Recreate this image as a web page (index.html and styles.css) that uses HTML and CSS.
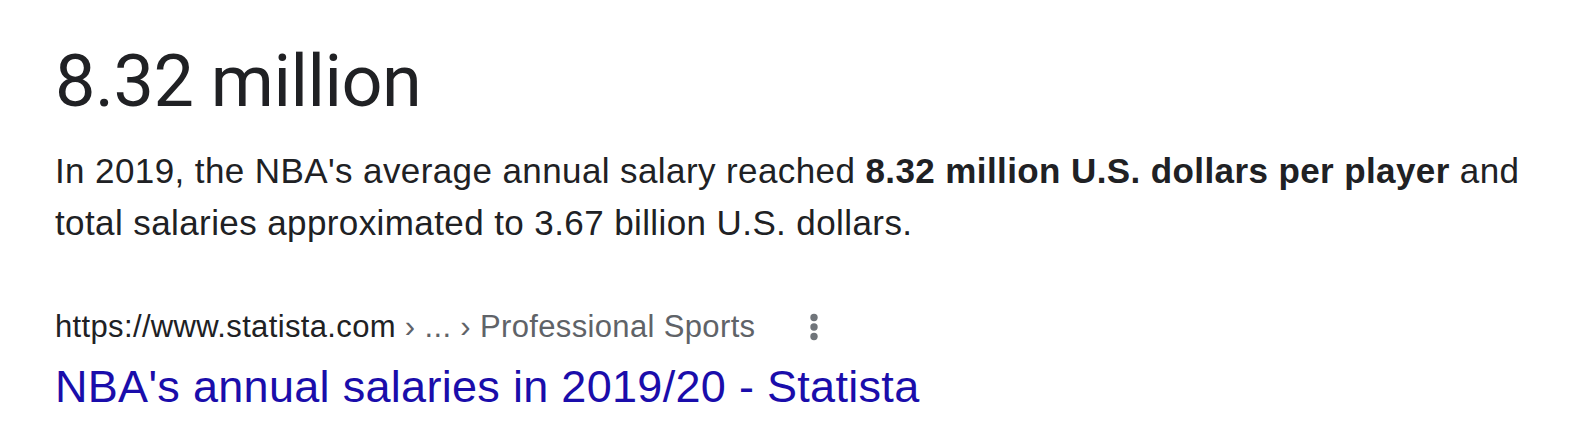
FILE: index.html
```html
<!DOCTYPE html>
<html lang="en">
<head>
<meta charset="utf-8">
<title>8.32 million</title>
<link rel="stylesheet" href="styles.css">
</head>
<body>
<div class="snippet">
  <div class="answer">8.32 million</div>
  <div class="desc">In 2019, the NBA's average annual salary reached <b>8.32 million U.S. dollars per player</b> and total salaries approximated to 3.67 billion U.S. dollars.</div>
  <div class="source">
    <div class="cite-row">
      <cite class="cite">https://www.statista.com<span class="crumbs"> › ... › Professional Sports</span></cite>
      <span class="more" aria-label="More options">
        <svg width="10" height="28" viewBox="0 0 10 28"><circle cx="5" cy="4.5" r="3.7" fill="#70757a"/><circle cx="5" cy="14" r="3.7" fill="#70757a"/><circle cx="5" cy="23.5" r="3.7" fill="#70757a"/></svg>
      </span>
    </div>
    <a class="title" href="#">NBA's annual salaries in 2019/20 - Statista</a>
  </div>
</div>
</body>
</html>
```
FILE: styles.css
```css
html, body {
  margin: 0;
  padding: 0;
  background: #ffffff;
}
.snippet {
  padding: 40px 0 0 55px;
  color: #202124;
  font-family: "Liberation Sans", Arial, sans-serif;
}
.answer {
  font-family: Roboto, "Open Sans", sans-serif;
  font-size: 72px;
  line-height: 84px;
  color: #202124;
  letter-spacing: -0.5px;
}
.desc {
  margin-top: 21px;
  font-size: 35px;
  line-height: 52px;
  letter-spacing: 0.4px;
  width: 1490px;
}
.desc b {
  font-weight: bold;
}
.source {
  margin-top: 58px;
}
.cite-row {
  display: flex;
  align-items: center;
  height: 40px;
}
.cite {
  font-style: normal;
  font-size: 31px;
  line-height: 40px;
  letter-spacing: 0.35px;
  color: #202124;
}
.crumbs {
  color: #5f6368;
}
.more {
  display: flex;
  margin-left: 54px;
}
.title {
  display: block;
  margin-top: 12px;
  font-size: 45px;
  line-height: 56px;
  letter-spacing: 0.3px;
  color: #1a0dab;
  text-decoration: none;
}
```
